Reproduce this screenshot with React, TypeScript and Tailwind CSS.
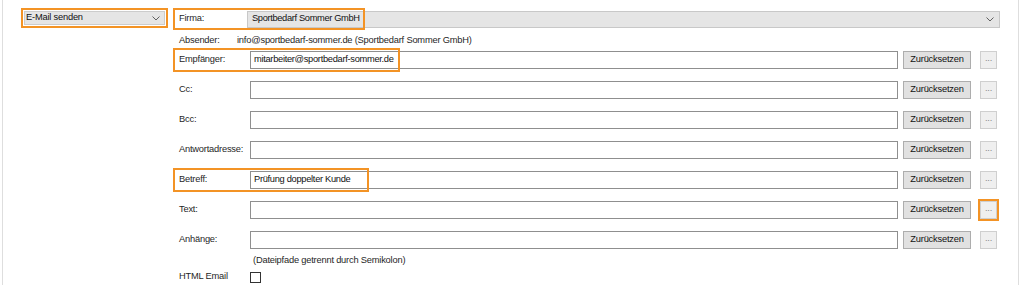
import React from "react";

const ORANGE = "border-[#f39325]";

function Row({
  label,
  value,
  h = "h-[30px]",
  labelBox,
  dotsBox,
}: {
  label: string;
  value?: string;
  h?: string;
  labelBox?: string;
  dotsBox?: boolean;
}) {
  return (
    <div className={`relative flex items-center ${h}`}>
      {labelBox && (
        <div
          className={`pointer-events-none absolute left-[-3px] top-1/2 h-[24px] -translate-y-1/2 border-[2.5px] ${ORANGE} ${labelBox}`}
        />
      )}
      <div className="w-[74px] shrink-0 whitespace-nowrap pl-[3px] text-[#1f1f1f]">{label}</div>
      <div className="flex h-[18px] w-[648px] shrink-0 items-center border border-[#8f8f8f] bg-white pl-[3px] tracking-[-0.3px] text-[#111]">
        {value}
      </div>
      <div className="ml-[5px] flex h-[18px] w-[68px] shrink-0 items-center justify-center border border-[#adadad] bg-[#e1e1e1] text-[#111]">
        Zurücksetzen
      </div>
      <div className="relative ml-[9px] flex h-[18px] w-[17px] shrink-0 items-center justify-center border border-[#cfcfcf] bg-[#efefef] pb-[3px] text-[#8a8a8a]">
        ...
        {dotsBox && (
          <div className={`pointer-events-none absolute -inset-[3px] border-[2.5px] ${ORANGE}`} />
        )}
      </div>
    </div>
  );
}

export default function App() {
  return (
    <div
      className="flex h-[285px] w-[1024px] overflow-hidden bg-white text-[9.3px] leading-none tracking-[-0.2px]"
      style={{ fontFamily: '"Liberation Sans", Arial, sans-serif' }}
    >
      <div className="w-[2px] shrink-0" />
      <div className="w-px shrink-0 bg-[#dedede]" />
      {/* left column */}
      <div className="w-[170px] shrink-0 pl-[18px] pt-[8px]">
        <div className={`h-[20px] w-[147px] border-[2.5px] ${ORANGE} p-px`}>
          <div className="flex h-full items-center justify-between border border-[#cccccc] bg-[#e5e5e5] pl-[1px] pr-[4px] text-[#111]">
            <span>E-Mail senden</span>
            <svg width="8" height="5" viewBox="0 0 8 5" fill="none">
              <path d="M0.5 0.5L4 4L7.5 0.5" stroke="#606060" strokeWidth="1" />
            </svg>
          </div>
        </div>
      </div>
      {/* form */}
      <div className="w-[845px] shrink-0 pl-[3px] pt-[8px]">
        {/* Firma */}
        <div className="relative flex h-[22px] items-center">
          <div className={`pointer-events-none absolute left-[-3px] top-0 h-[22px] w-[192px] border-[2.5px] ${ORANGE}`} />
          <div className="w-[71px] shrink-0 pl-[3px] text-[#1f1f1f]">Firma:</div>
          <div className="flex h-[17px] w-[753px] shrink-0 items-center justify-between border border-[#c8c8c8] bg-[#e5e5e5] pl-[4px] pr-[5px] text-[#111]">
            <span className="tracking-[-0.35px]">Sportbedarf Sommer GmbH</span>
            <svg width="8" height="5" viewBox="0 0 8 5" fill="none">
              <path d="M0.5 0.5L4 4L7.5 0.5" stroke="#606060" strokeWidth="1" />
            </svg>
          </div>
        </div>
        {/* Absender */}
        <div className="flex h-[15px] items-end text-[#1f1f1f]">
          <div className="w-[61px] shrink-0 pl-[3px]">Absender:</div>
          <div>info@sportbedarf-sommer.de (Sportbedarf Sommer GmbH)</div>
        </div>
        <Row label="Empfänger:" value="mitarbeiter@sportbedarf-sommer.de" labelBox="w-[227px]" />
        <Row label="Cc:" />
        <Row label="Bcc:" />
        <Row label="Antwortadresse:" />
        <Row label="Betreff:" value="Prüfung doppelter Kunde" labelBox="w-[196px]" />
        <Row label="Text:" dotsBox />
        <Row label="Anhänge:" />
        <div className="flex h-[12px] items-center pl-[77px] text-[#1f1f1f]">
          (Dateipfade getrennt durch Semikolon)
        </div>
        <div className="flex h-[20px] items-center">
          <div className="w-[74px] shrink-0 pl-[3px] text-[#1f1f1f]">HTML Email</div>
          <div className="h-[11px] w-[11px] border border-[#333]" />
        </div>
      </div>
      <div className="w-px shrink-0 bg-[#dedede]" />
    </div>
  );
}
